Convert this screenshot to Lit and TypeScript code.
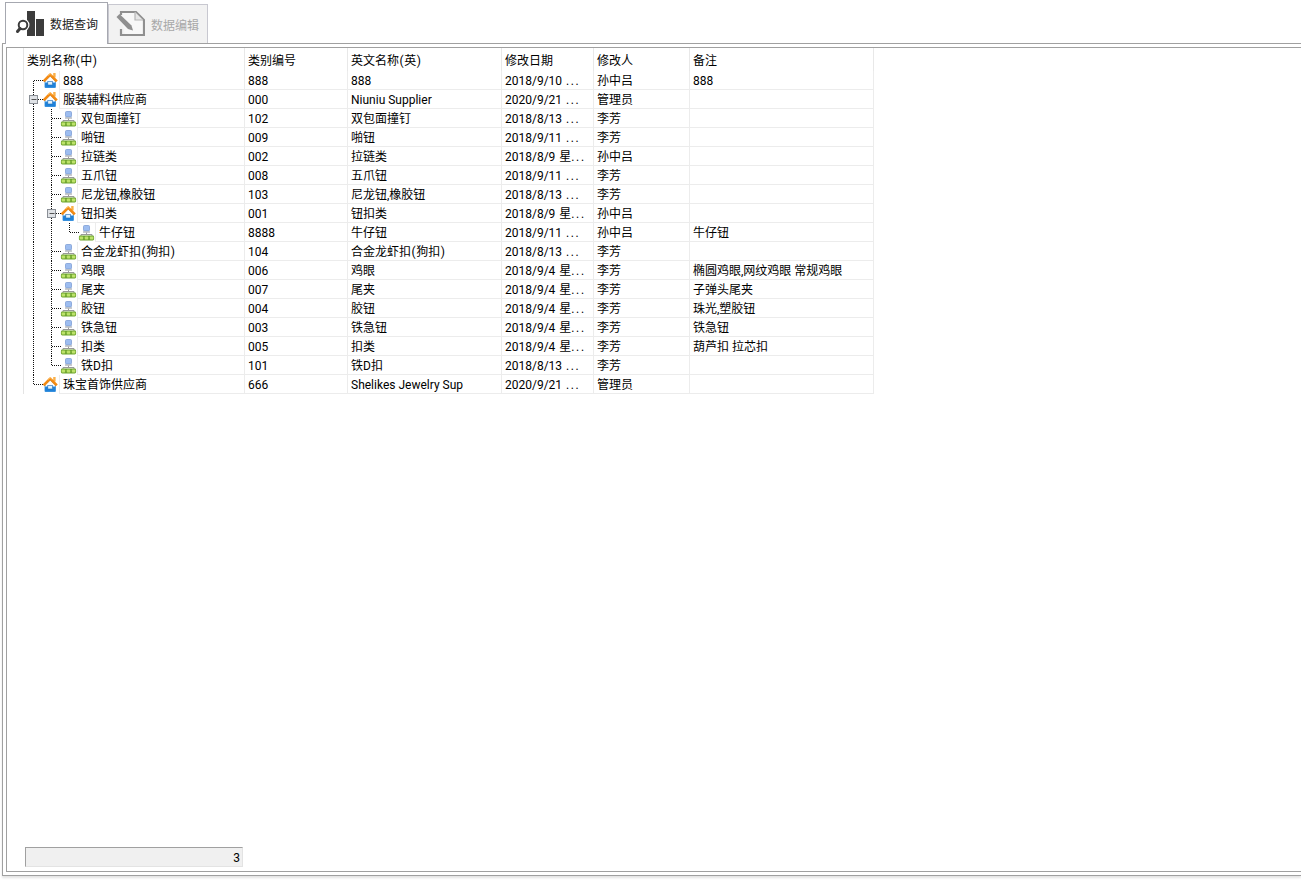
import { LitElement, html, css, svg } from "lit";
import { customElement } from "lit/decorators.js";

type Row = { lv: number; kind: "home" | "node"; exp?: boolean; name: string; code: string; en: string; date: string; user: string; note: string; };

const ROWS: Row[] = [
  { lv: 0, kind: "home", name: "888", code: "888", en: "888", date: "2018/9/10 ...", user: "孙中吕", note: "888" },
  { lv: 0, kind: "home", exp: true, name: "服装辅料供应商", code: "000", en: "Niuniu Supplier", date: "2020/9/21 ...", user: "管理员", note: "" },
  { lv: 1, kind: "node", name: "双包面撞钉", code: "102", en: "双包面撞钉", date: "2018/8/13 ...", user: "李芳", note: "" },
  { lv: 1, kind: "node", name: "啪钮", code: "009", en: "啪钮", date: "2018/9/11 ...", user: "李芳", note: "" },
  { lv: 1, kind: "node", name: "拉链类", code: "002", en: "拉链类", date: "2018/8/9 星...", user: "孙中吕", note: "" },
  { lv: 1, kind: "node", name: "五爪钮", code: "008", en: "五爪钮", date: "2018/9/11 ...", user: "李芳", note: "" },
  { lv: 1, kind: "node", name: "尼龙钮,橡胶钮", code: "103", en: "尼龙钮,橡胶钮", date: "2018/8/13 ...", user: "李芳", note: "" },
  { lv: 1, kind: "home", exp: true, name: "钮扣类", code: "001", en: "钮扣类", date: "2018/8/9 星...", user: "孙中吕", note: "" },
  { lv: 2, kind: "node", name: "牛仔钮", code: "8888", en: "牛仔钮", date: "2018/9/11 ...", user: "孙中吕", note: "牛仔钮" },
  { lv: 1, kind: "node", name: "合金龙虾扣(狗扣)", code: "104", en: "合金龙虾扣(狗扣)", date: "2018/8/13 ...", user: "李芳", note: "" },
  { lv: 1, kind: "node", name: "鸡眼", code: "006", en: "鸡眼", date: "2018/9/4 星...", user: "李芳", note: "椭圆鸡眼,网纹鸡眼 常规鸡眼" },
  { lv: 1, kind: "node", name: "尾夹", code: "007", en: "尾夹", date: "2018/9/4 星...", user: "李芳", note: "子弹头尾夹" },
  { lv: 1, kind: "node", name: "胶钮", code: "004", en: "胶钮", date: "2018/9/4 星...", user: "李芳", note: "珠光,塑胶钮" },
  { lv: 1, kind: "node", name: "铁急钮", code: "003", en: "铁急钮", date: "2018/9/4 星...", user: "李芳", note: "铁急钮" },
  { lv: 1, kind: "node", name: "扣类", code: "005", en: "扣类", date: "2018/9/4 星...", user: "李芳", note: "葫芦扣 拉芯扣" },
  { lv: 1, kind: "node", name: "铁D扣", code: "101", en: "铁D扣", date: "2018/8/13 ...", user: "李芳", note: "" },
  { lv: 0, kind: "home", name: "珠宝首饰供应商", code: "666", en: "Shelikes Jewelry Sup", date: "2020/9/21 ...", user: "管理员", note: "" },
];

const homeIcon = (x: number) => svg`<g transform="translate(${x} 2)">
  <rect x="10.2" y="0" width="2.4" height="4.5" fill="#f9b04a"/>
  <path d="M2 8 L7.2 3 L12.4 8 V14.5 H2 Z" fill="#fbfdff" stroke="#3d94dc" stroke-width=".9"/>
  <rect x="2" y="9.5" width="10.4" height="5" rx="1" fill="#1f82da"/>
  <rect x="4.8" y="8.6" width="4.8" height="3.4" fill="#dff1fc" stroke="#1668b8" stroke-width=".6"/>
  <path d="M0.6 8.4 L7.2 1.6 L13.8 8.4" fill="none" stroke="#f48a12" stroke-width="2.7" stroke-linejoin="round"/>
  <path d="M5 2.6 L7.2 0.8 L9.4 2.6" fill="none" stroke="#ffc56a" stroke-width=".9"/>
</g>`;

const nodeIcon = (x: number) => svg`<g transform="translate(${x} 2)">
  <rect x="5" y="0.5" width="6" height="5.4" rx="1" fill="#9dbdf0" stroke="#7f9ed4" stroke-width=".8"/>
  <rect x="4.5" y="6.4" width="7" height="1.2" fill="#a4a9b0"/>
  <path d="M8 7.6 V9.5 M2.5 11 V9.5 H13.5 V11" fill="none" stroke="#9a9a9a" stroke-width="1"/>
  <rect x="0.4" y="10.6" width="15.2" height="4.8" rx="1.4" fill="#6fa52f"/>
  <rect x="1.2" y="11.4" width="3.4" height="3.2" rx=".8" fill="#bce26a"/>
  <rect x="6.3" y="11.4" width="3.4" height="3.2" rx=".8" fill="#bce26a"/>
  <rect x="11.4" y="11.4" width="3.4" height="3.2" rx=".8" fill="#bce26a"/>
</g>`;

const dotted = (x1: number, y1: number, x2: number, y2: number) =>
  svg`<line x1=${x1} y1=${y1} x2=${x2} y2=${y2} stroke="#111" stroke-width="1" stroke-dasharray="1 1" shape-rendering="crispEdges"/>`;

function prefix(r: Row, i: number) {
  const rowH = 19;
  const mid = 9.5;
  const w = 35 + r.lv * 18;
  const lastTop = i === ROWS.length - 1;
  const lastChild = r.lv === 1 && ROWS[i + 1]?.lv === 0;
  const parts: unknown[] = [];
  const x0 = 9.5, x1 = 27.5, x2 = 45.5;
  parts.push(dotted(x0, i === 0 ? mid : 0, x0, lastTop ? mid : rowH));
  if (r.lv === 0) parts.push(dotted(x0, mid, 19, mid));
  if (r.lv >= 1) parts.push(dotted(x1, 0, x1, lastChild ? mid : rowH));
  if (r.lv === 1) parts.push(dotted(x1, mid, 37, mid));
  if (r.lv === 2) {
    parts.push(dotted(x2, 0, x2, mid));
    parts.push(dotted(x2, mid, 55, mid));
  }
  const lx = r.lv === 0 ? x0 : r.lv === 1 ? x1 : x2;
  if (r.exp) {
    parts.push(svg`<rect x=${lx - 4} y="5.5" width="8" height="8" fill="#dfe2e6" stroke="#8a8f96"/>
      <line x1=${lx - 2} x2=${lx + 3} y1="9.5" y2="9.5" stroke="#555"/>`);
  }
  const ix = r.kind === "node" ? 18.5 + r.lv * 18 : 19 + r.lv * 18;
  parts.push(r.kind === "home" ? homeIcon(ix) : nodeIcon(ix));
  return svg`<svg class="prefix" width=${w} height=${rowH} viewBox="0 0 ${w} ${rowH}">${parts}</svg>`;
}

/** Parens render slightly wider in the reference's UI font. */
const txt = (s: string) =>
  s.split(/([()])/).map((p) => (p === "(" || p === ")" ? html`<span class="paren">${p}</span>` : p));

const dateCell = (d: string) => html`${d.slice(0, -3)}<span class="dots">...</span>`;

@customElement("app-root")
export class AppRoot extends LitElement {
  static styles = css`
    :host {
      display: block;
      width: 1301px;
      height: 882px;
      overflow: hidden;
      background: #fff;
      color: #000;
      font-family: Roboto, "Noto Sans CJK SC", sans-serif;
      font-size: 12px;
    }
    .page { display: flex; flex-direction: column; height: 876px; }
    .tabs { display: flex; align-items: flex-end; height: 43px; padding-left: 5px; box-sizing: border-box; flex: none; }
    .tab { display: flex; align-items: center; box-sizing: border-box; border: 1px solid #a6a8b0; border-bottom: none; }
    .tab.on { width: 103px; height: 42px; background: #fff; padding: 0 0 0 9px; gap: 2px; color: #222; position: relative; margin-bottom: -1px; z-index: 1; }
    .tab.off { width: 100px; height: 39px; background: #f2f2f2; border-color: #c8c8d0; padding: 0 0 0 6px; gap: 6px; color: #a8a8a8; }
    .outer { flex: 1; min-height: 0; margin-left: 2px; border: 1px solid #a0a0a0; border-right: none; padding: 3px 0 3px 3px; display: flex; box-shadow: 0 2px 2px #e4e4e4; }
    .inner { flex: 1; border: 1px solid #a0a0a0; border-right: none; padding-left: 16px; display: flex; flex-direction: column; }
    .grid { width: 851px; border-left: 1px solid #e4e4e4; }
    .row { display: grid; grid-template-columns: 221px 103px 154px 92px 96px 184px; height: 19px; }
    .head { height: 23px; }
    .head .cell { line-height: 26px; border-bottom: none; border-right-color: #e8e8e8; }
    .cell { box-sizing: border-box; border-right: 1px solid #ececec; border-bottom: 1px solid #ececec; padding-left: 3px; line-height: 21px; white-space: nowrap; overflow: hidden; }
    .tree { display: flex; padding: 0; border-bottom: none; }
    .prefix { flex: none; display: block; }
    .label { flex: 1; box-sizing: border-box; border-left: 1px solid #ececec; border-bottom: 1px solid #ececec; padding-left: 3px; }
    .paren { padding: 0 0.5px; }
    .date { word-spacing: 1px; }
    .dots { letter-spacing: 1.6px; }
    .status { margin: auto 0 4px 2px; width: 218px; height: 20px; box-sizing: border-box; background: #f0f0f0; border: 1px solid; border-color: #a0a0a0 #e3e3e3 #e3e3e3 #a0a0a0; text-align: right; padding-right: 2px; line-height: 20px; }
    svg { display: block; flex: none; }
  `;

  render() {
    return html`<div class="page">
      <div class="tabs">
        <div class="tab on">
          <svg width="33" height="30" viewBox="0 0 33 30">
            <rect x="12" y="2" width="8" height="25" fill="#3c3c3c"/>
            <rect x="21" y="10" width="8" height="17" fill="#3c3c3c"/>
            <circle cx="8" cy="16" r="6.5" fill="#fff"/>
            <circle cx="8" cy="16" r="4.3" fill="#fff" stroke="#3c3c3c" stroke-width="2"/>
            <path d="M5 19.5 L2.5 22.5" stroke="#3c3c3c" stroke-width="3" stroke-linecap="round"/>
          </svg>
          <span>数据查询</span>
        </div>
        <div class="tab off">
          <svg width="30" height="30" viewBox="0 0 30 30">
            <path d="M6 6 V3 H21 L29 11 V26 H10" fill="#f7f7f7" stroke="#8f8f8f" stroke-width="2.2"/>
            <path d="M6 20 V26 H10" fill="none" stroke="#8f8f8f" stroke-width="2.2"/>
            <path d="M20 3 V11 H28" fill="#e6e6e6" stroke="#b5b5b5" stroke-width="1.2"/>
            <path d="M1.5 8 L4.5 5 L16.5 16.5 L18 21.5 L13 20 Z" fill="#8f8f8f"/>
          </svg>
          <span>数据编辑</span>
        </div>
      </div>
      <div class="outer">
        <div class="inner">
          <div class="grid">
            <div class="row head">
              ${["类别名称(中)", "类别编号", "英文名称(英)", "修改日期", "修改人", "备注"].map((h) => html`<div class="cell">${txt(h)}</div>`)}
            </div>
            ${ROWS.map((r, i) => html`<div class="row">
              <div class="cell tree">${prefix(r, i)}<div class="label">${txt(r.name)}</div></div>
              <div class="cell">${r.code}</div>
              <div class="cell">${txt(r.en)}</div>
              <div class="cell date">${dateCell(r.date)}</div>
              <div class="cell">${r.user}</div>
              <div class="cell">${r.note}</div>
            </div>`)}
          </div>
          <div class="status">3</div>
        </div>
      </div>
    </div>`;
  }
}
